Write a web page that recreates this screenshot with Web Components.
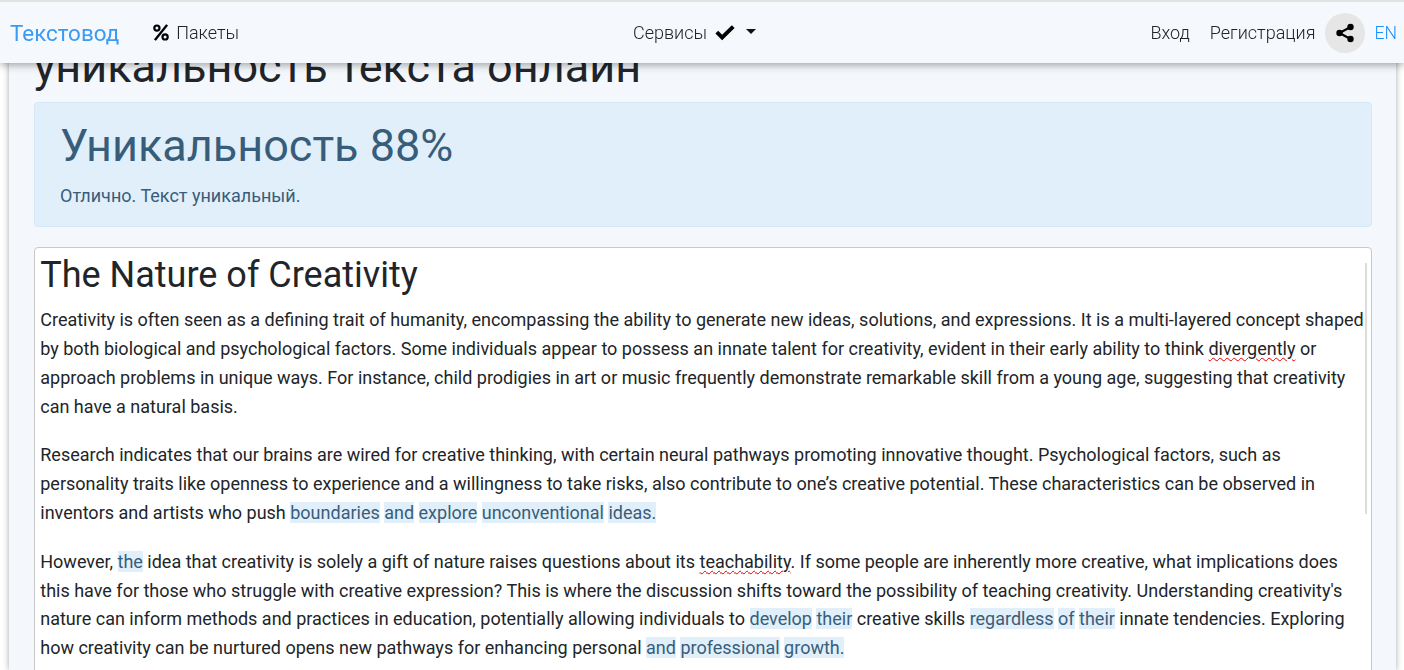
<!DOCTYPE html>
<html lang="ru">
<head>
<meta charset="utf-8">
<title>Текстовод</title>
<style>
    html, body { margin: 0; height: 670px; overflow: hidden; background: #fff; }
    body { font-family: Roboto, "Liberation Sans", sans-serif; color: #212529; }
</style>
</head>
<body>
<app-nav></app-nav>
<page-sheet>
    <h1 slot="title">уникальность текста онлайн</h1>
    <result-alert percent="88" note="Отлично. Текст уникальный."></result-alert>
    <text-card>
        <h2>The Nature of Creativity</h2>
        <p>Creativity is often seen as a defining trait of humanity, encompassing the ability to generate new ideas, solutions, and expressions. It is a multi-layered concept shaped by both biological and psychological factors. Some individuals appear to possess an innate talent for creativity, evident in their early ability to think <spell-err>divergently</spell-err> or approach problems in unique ways. For instance, child prodigies in art or music frequently demonstrate remarkable skill from a young age, suggesting that creativity can have a natural basis.</p>
        <p>Research indicates that our brains are wired for creative thinking, with certain neural pathways promoting innovative thought. Psychological factors, such as personality traits like openness to experience and a willingness to take risks, also contribute to one’s creative potential. These characteristics can be observed in inventors and artists who push <dup-word>boundaries</dup-word> <dup-word>and</dup-word> <dup-word>explore</dup-word> <dup-word>unconventional</dup-word> <dup-word>ideas.</dup-word></p>
        <p>However, <dup-word>the</dup-word> idea that creativity is solely a gift of nature raises questions about its <spell-err>teachability</spell-err>. If some people are inherently more creative, what implications does this have for those who struggle with creative expression? This is where the discussion shifts toward the possibility of teaching creativity. Understanding creativity's nature can inform methods and practices in education, potentially allowing individuals to <dup-word>develop</dup-word> <dup-word>their</dup-word> creative skills <dup-word>regardless</dup-word> <dup-word>of</dup-word> <dup-word>their</dup-word> innate tendencies. Exploring how creativity can be nurtured opens new pathways for enhancing personal <dup-word>and</dup-word> <dup-word>professional</dup-word> <dup-word>growth.</dup-word></p>
    </text-card>
</page-sheet>

<script>
class AppNav extends HTMLElement {
    constructor() {
        super();
        this.attachShadow({ mode: 'open' });
        this.shadowRoot.innerHTML = `
            <style>
                :host {
                    position: fixed;
                    top: 0;
                    left: 0;
                    right: 0;
                    z-index: 10;
                    height: 61px;
                    box-sizing: content-box;
                    border-top: 2px solid #e2e2e2;
                    background: #f5f8fc;
                    box-shadow: 0 2px 8px rgba(0,0,0,0.35);
                    display: grid;
                    grid-template-columns: 1fr auto 1fr;
                    align-items: center;
                    padding: 0 7px 0 10px;
                    font-size: 18px;
                    font-weight: 300;
                    color: #212529;
                }
                .left, .right { display: flex; align-items: center; }
                .right { justify-content: flex-end; }
                .brand { font-size: 22.4px; font-weight: 400; color: #3a9bf4; margin-right: 33px; }
                .item { display: flex; align-items: center; }
                svg { display: block; fill: #000; }
                .pct { margin-right: 6px; }
                .check { margin-left: 8px; }
                .caret {
                    margin-left: 11px;
                    margin-top: -3px;
                    width: 0;
                    border-top: 5px solid #111;
                    border-left: 5px solid transparent;
                    border-right: 5px solid transparent;
                }
                .center { margin-right: 18px; }
                .login { margin-right: 20px; }
                .share {
                    width: 40px;
                    height: 40px;
                    border-radius: 50%;
                    background: #e6e6e6;
                    display: flex;
                    align-items: center;
                    justify-content: center;
                    margin: 0 9px 0 10px;
                }
                .lang { color: #1e90ff; font-size: 17.6px; }
            </style>
            <div class="left">
                <span class="brand">Текстовод</span>
                <span class="item">
                    <svg class="pct" width="18" height="19" viewBox="0 0 17 19">
                        <path d="M13.6 1.2 15.6 2.6 3.4 17.8 1.4 16.4Z"/>
                        <path fill-rule="evenodd" d="M4.4 1.4a3.7 3.7 0 1 1 0 7.4 3.7 3.7 0 0 1 0-7.4Zm0 2.2a1.5 1.5 0 1 0 0 3 1.5 1.5 0 0 0 0-3Z"/>
                        <path fill-rule="evenodd" d="M12.6 10.2a3.7 3.7 0 1 1 0 7.4 3.7 3.7 0 0 1 0-7.4Zm0 2.2a1.5 1.5 0 1 0 0 3 1.5 1.5 0 0 0 0-3Z"/>
                    </svg>
                    Пакеты
                </span>
            </div>
            <div class="center item">
                Сервисы
                <svg class="check" width="20" height="16" viewBox="0 0 19 15">
                    <path d="M6.8 14.4.4 8 3 5.4 6.8 9.2 16 .2 18.6 2.8Z"/>
                </svg>
                <span class="caret"></span>
            </div>
            <div class="right">
                <span class="login">Вход</span>
                <span>Регистрация</span>
                <span class="share">
                    <svg width="20" height="20" viewBox="0 0 20 20">
                        <circle cx="15.5" cy="4" r="3.2"/>
                        <circle cx="4.5" cy="10" r="3.2"/>
                        <circle cx="15.5" cy="16" r="3.2"/>
                        <path d="M15 2.9 16 4.9 5 11 4 9ZM5 9 16 15.1 15 17.1 4 11Z"/>
                    </svg>
                </span>
                <span class="lang">EN</span>
            </div>`;
    }
}

class PageSheet extends HTMLElement {
    constructor() {
        super();
        this.attachShadow({ mode: 'open' });
        this.shadowRoot.innerHTML = `
            <style>
                :host {
                    display: block;
                    margin: 0 8px 0 9px;
                    padding: 0 24px 0 25px;
                    background: #f4f7fb;
                    box-shadow: 0 0 6px rgba(0,0,0,0.35);
                    height: 670px;
                    overflow: hidden;
                }
                ::slotted(h1) {
                    margin: 0 0 8px;
                    font-size: 45px;
                    font-weight: 400;
                    line-height: 54px;
                    color: #212529;
                    padding-top: 40px;
                }
            </style>
            <slot name="title"></slot>
            <slot></slot>`;
    }
}

class ResultAlert extends HTMLElement {
    constructor() {
        super();
        this.attachShadow({ mode: 'open' });
        this.shadowRoot.innerHTML = `
            <style>
                :host {
                    display: block;
                    box-sizing: border-box;
                    height: 125px;
                    padding: 16px 25px 0;
                    margin-bottom: 20px;
                    background: #e1effb;
                    border: 1px solid #d6e8f8;
                    border-radius: 4px;
                    color: #385d7a;
                }
                .big { font-size: 45px; line-height: 54px; }
                .note { font-size: 18px; line-height: 27px; margin-top: 9px; }
            </style>
            <div class="big"></div>
            <div class="note"></div>`;
    }

    connectedCallback() {
        this.shadowRoot.querySelector('.big').textContent = `Уникальность ${this.getAttribute('percent')}%`;
        this.shadowRoot.querySelector('.note').textContent = this.getAttribute('note');
    }
}

class TextCard extends HTMLElement {
    constructor() {
        super();
        this.attachShadow({ mode: 'open' });
        this.shadowRoot.innerHTML = `
            <style>
                :host {
                    display: block;
                    position: relative;
                    box-sizing: border-box;
                    padding: 6px 6px 0 5.25px;
                    height: 480px;
                    background: #fff;
                    border: 1px solid #c8c8c8;
                    border-radius: 4px;
                    font-size: 18px;
                    line-height: 28.8px;
                    color: #212529;
                }
                ::slotted(h2) {
                    margin: 0 0 9.3px;
                    font-size: 36px;
                    font-weight: 400;
                    line-height: 43px;
                }
                ::slotted(p) { margin: 0 0 20px; }
                .thumb {
                    position: absolute;
                    top: 15px;
                    right: 4px;
                    width: 2px;
                    height: 251px;
                    background: #dcdcdc;
                }
            </style>
            <slot></slot>
            <div class="thumb"></div>`;
    }
}

class DupWord extends HTMLElement {
    constructor() {
        super();
        this.attachShadow({ mode: 'open' });
        this.shadowRoot.innerHTML = `
            <style>
                :host { display: inline; background: #e1effb; color: #385d7a; }
            </style>
            <slot></slot>`;
    }
}

class SpellErr extends HTMLElement {
    constructor() {
        super();
        this.attachShadow({ mode: 'open' });
        this.shadowRoot.innerHTML = `
            <style>
                :host { display: inline; text-decoration: underline wavy #e00000 1px; text-underline-offset: 2px; }
            </style>
            <slot></slot>`;
    }
}

customElements.define('app-nav', AppNav);
customElements.define('page-sheet', PageSheet);
customElements.define('result-alert', ResultAlert);
customElements.define('text-card', TextCard);
customElements.define('dup-word', DupWord);
customElements.define('spell-err', SpellErr);
</script>
</body>
</html>
